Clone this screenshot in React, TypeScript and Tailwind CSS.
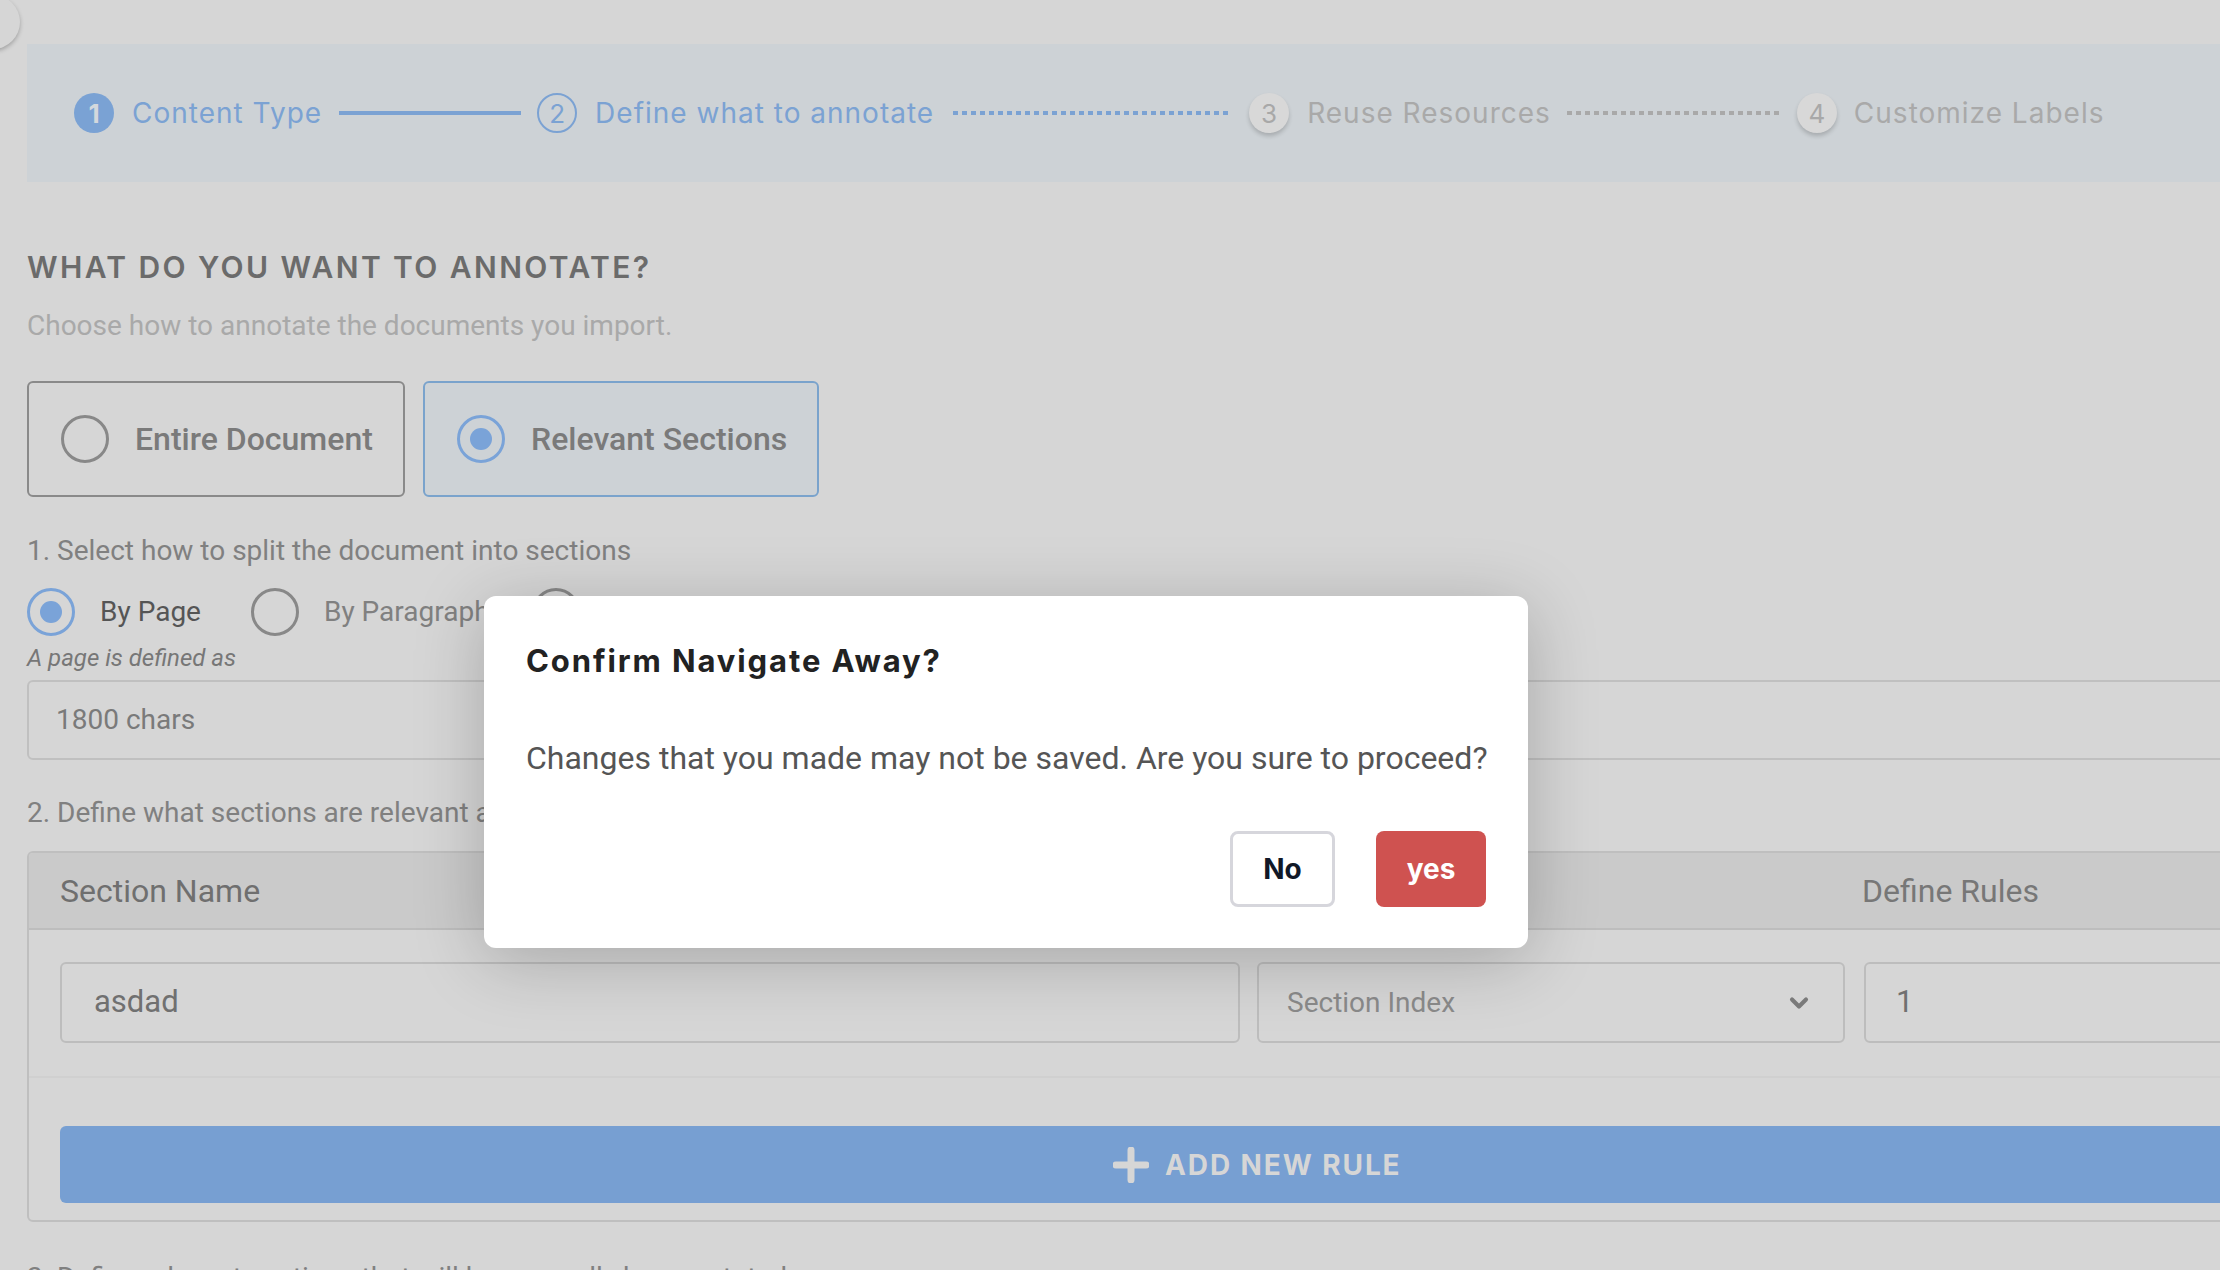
import React from "react";
import { ChevronDown } from "lucide-react";

type StepState = "done" | "current" | "todo";

const StepCircle: React.FC<{ n: number; state: StepState }> = ({ n, state }) => {
  if (state === "done") {
    return (
      <div className="w-10 h-10 rounded-full bg-[#7aa2d4] flex items-center justify-center text-[#d3d8dd] text-[26px] font-bold tracking-normal shrink-0">
        {n}
      </div>
    );
  }
  if (state === "current") {
    return (
      <div className="w-10 h-10 rounded-full border-2 border-[#7ba2d3] flex items-center justify-center text-[#7ba2d3] text-[26px] tracking-normal shrink-0">
        {n}
      </div>
    );
  }
  return (
    <div className="w-10 h-10 rounded-full bg-[#d8d8d8] shadow-[0_3px_4px_rgba(0,0,0,0.18)] flex items-center justify-center text-[#a8a8a8] text-[26px] tracking-normal shrink-0">
      {n}
    </div>
  );
};

const Radio: React.FC<{ checked?: boolean }> = ({ checked }) => (
  <div
    className={
      checked
        ? "w-12 h-12 rounded-full border-[3px] border-[#7aa3d8] flex items-center justify-center shrink-0"
        : "w-12 h-12 rounded-full border-[3px] border-[#888888] shrink-0"
    }
  >
    {checked && <div className="w-[22px] h-[22px] rounded-full bg-[#7aa3d8]" />}
  </div>
);

const App: React.FC = () => {
  return (
    <div className="relative w-screen h-screen overflow-hidden bg-[#d6d6d6] font-[family-name:Roboto,sans-serif]">
      {/* corner button peeking in */}
      <div className="absolute -left-[34px] -top-[5px] w-[54px] h-[54px] rounded-full bg-[#d6d6d6] shadow-[0_2px_4px_rgba(0,0,0,0.25)]" />

      <div className="w-[2400px] pl-[27px]">
        {/* Stepper */}
        <div className="mt-[44px] h-[138px] bg-[#cdd2d6] flex items-center pl-[47px] font-[family-name:Inter,sans-serif] text-[28px] tracking-[1px]">
          <StepCircle n={1} state="done" />
          <span className="ml-[18px] text-[#7ba2d3]">Content Type</span>
          <div className="ml-[17px] w-[182px] h-[4px] bg-[#7ba2d3]" />
          <div className="ml-[16px]">
            <StepCircle n={2} state="current" />
          </div>
          <span className="ml-[18px] text-[#7ba2d3]">Define what to annotate</span>
          <div className="ml-[19px] w-[278px] h-[4px] bg-[repeating-linear-gradient(90deg,#7ba2d3_0_5px,transparent_5px_9px)]" />
          <div className="ml-[18px]">
            <StepCircle n={3} state="todo" />
          </div>
          <span className="ml-[18px] text-[#a9a9a9]">Reuse Resources</span>
          <div className="ml-[16px] w-[212px] h-[4px] bg-[repeating-linear-gradient(90deg,#a9a9a9_0_5px,transparent_5px_9px)]" />
          <div className="ml-[18px]">
            <StepCircle n={4} state="todo" />
          </div>
          <span className="ml-[17px] text-[#a9a9a9]">Customize Labels</span>
        </div>

        {/* Heading */}
        <h2 className="mt-[68px] h-[34px] leading-[34px] font-[family-name:Inter,sans-serif] font-semibold text-[30px] text-[#6b6b6b] tracking-[2.4px]">
          WHAT DO YOU WANT TO ANNOTATE?
        </h2>
        <p className="mt-[25px] h-[34px] leading-[34px] text-[28px] text-[#a9a9a9]">
          Choose how to annotate the documents you import.
        </p>

        {/* Content options */}
        <div className="mt-[38px] flex gap-[18px]">
          <div className="w-[378px] h-[116px] rounded-[6px] border-2 border-[#8a8a8a] flex items-center pl-[32px] gap-[26px]">
            <Radio />
            <span className="text-[32px] font-medium text-[#7a7a7a]">Entire Document</span>
          </div>
          <div className="w-[396px] h-[116px] rounded-[6px] border-2 border-[#7aa3cc] bg-[#cdd2d6] flex items-center pl-[32px] gap-[26px]">
            <Radio checked />
            <span className="text-[32px] font-medium text-[#7a7a7a]">Relevant Sections</span>
          </div>
        </div>

        {/* Split */}
        <p className="mt-[38px] h-[32px] leading-[32px] text-[28px] text-[#808080]">
          1. Select how to split the document into sections
        </p>
        <div className="mt-[21px] flex items-center">
          <Radio checked />
          <span className="ml-[25px] text-[28px] text-[#555555]">By Page</span>
          <div className="ml-[50px]">
            <Radio />
          </div>
          <span className="ml-[25px] text-[28px] text-[#808080]">By Paragraph</span>
          <div className="ml-[42px]">
            <Radio />
          </div>
          <span className="ml-[25px] text-[28px] text-[#808080]">By Section</span>
        </div>
        <p className="mt-[9px] h-[27px] leading-[27px] text-[24px] italic text-[#777777]">A page is defined as</p>
        <div className="mt-[8px] w-[2300px] h-[80px] rounded-[6px] border-2 border-[#c0c0c0] flex items-center pl-[27px] text-[28px] text-[#7a7a7a]">
          1800 chars
        </div>

        <p className="mt-[37px] h-[32px] leading-[32px] text-[28px] text-[#808080]">
          2. Define what sections are relevant and should be annotated
        </p>

        {/* Rules table */}
        <div className="mt-[22px] w-[2300px] rounded-[6px] border-2 border-[#bfbfbf]">
          <div className="h-[77px] bg-[#cacaca] border-b-2 border-[#bdbdbd] rounded-t-[4px] flex items-center text-[32px] text-[#6f6f6f]">
            <span className="pl-[31px] w-[1833px] shrink-0">Section Name</span>
            <span className="text-[#777777]">Define Rules</span>
          </div>
          <div className="h-[148px] border-b-2 border-[#d0d0d0] flex pt-[32px] pl-[31px]">
            <div className="w-[1180px] h-[81px] shrink-0 rounded-[6px] border-2 border-[#bdbdbd] flex items-center pl-[32px] text-[31px] text-[#707070]">
              asdad
            </div>
            <div className="ml-[17px] w-[588px] h-[81px] shrink-0 rounded-[6px] border-2 border-[#bdbdbd] flex items-center justify-between pl-[28px] pr-[30px] text-[28px] text-[#8a8a8a]">
              <span>Section Index</span>
              <ChevronDown size={28} strokeWidth={3.5} className="text-[#7a7a7a]" />
            </div>
            <div className="ml-[19px] w-[600px] h-[81px] shrink-0 rounded-[6px] border-2 border-[#bdbdbd] flex items-center pl-[30px] text-[31px] text-[#707070]">
              1
            </div>
          </div>
          <div className="pt-[48px] pb-[17px] pl-[31px]">
            <div className="w-[2300px] h-[77px] rounded-[6px] bg-[#779fd2] flex items-center pl-[1053px] gap-[16px] font-[family-name:Inter,sans-serif] font-bold text-[28px] text-[#d6d6d6] tracking-[1.9px]">
              <svg width="36" height="36" viewBox="0 0 36 36" aria-hidden="true">
                <path d="M18 3v30M3 18h30" stroke="#d6d6d6" strokeWidth="7" strokeLinecap="round" />
              </svg>
              <span>ADD NEW RULE</span>
            </div>
          </div>
        </div>

        <p className="mt-[40px] h-[32px] leading-[32px] text-[28px] text-[#808080]">
          3. Define relevant sections that will be manually be annotated
        </p>
      </div>

      {/* Confirm dialog */}
      <div className="absolute left-[484px] top-[596px] w-[1044px] h-[352px] rounded-[12px] bg-white shadow-[0_12px_70px_rgba(0,0,0,0.22)] px-[42px] pt-[47px]">
        <h3 className="h-[36px] leading-[36px] font-[family-name:Inter,sans-serif] font-bold text-[31px] text-[#222222] tracking-[1.9px]">
          Confirm Navigate Away?
        </h3>
        <p className="mt-[60px] h-[38px] leading-[38px] text-[32px] text-[#555555] whitespace-nowrap">
          Changes that you made may not be saved. Are you sure to proceed?
        </p>
        <div className="mt-[54px] flex justify-end gap-[41px]">
          <button className="w-[105px] h-[76px] rounded-[8px] border-[3px] border-[#d6d6dc] bg-white font-[family-name:Inter,sans-serif] font-bold text-[28px] text-[#111827]">
            No
          </button>
          <button className="w-[110px] h-[76px] rounded-[8px] bg-[#cf5250] font-[family-name:Inter,sans-serif] font-bold text-[28px] text-white">
            yes
          </button>
        </div>
      </div>
    </div>
  );
};

export default App;
